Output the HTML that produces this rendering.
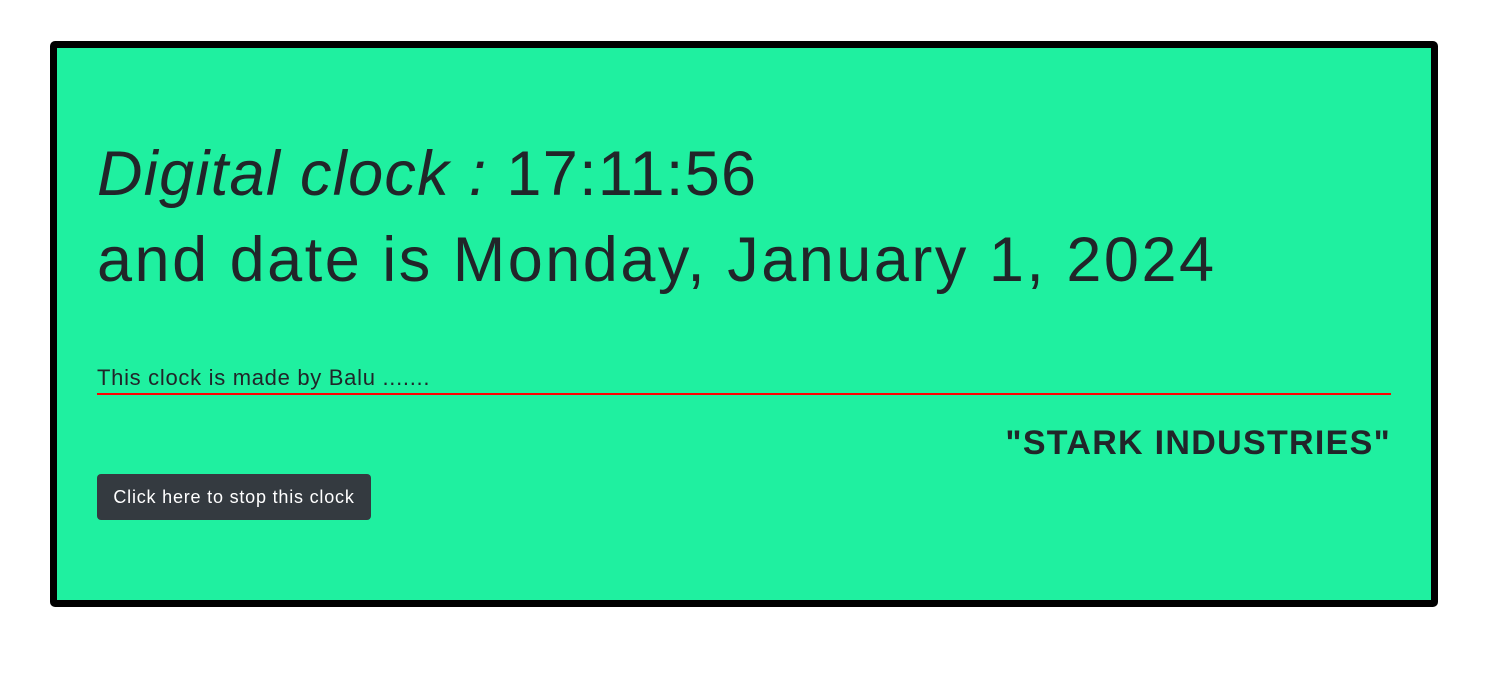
<!DOCTYPE html>
<html><head><meta charset="utf-8"><style>
body{margin:0;width:1491px;height:675px;background:#fff;font-family:"Liberation Sans",sans-serif;color:#212529;position:relative;overflow:hidden}
.box{position:absolute;left:50px;top:41px;width:1374px;height:552px;border:7px solid #000;border-radius:5px;background:#1ff0a0}
.t{position:absolute;white-space:nowrap}
</style></head><body>
<div class="box"></div>
<div class="t" style="left:97px;top:134px;font-size:63px;line-height:80px;letter-spacing:1.3px"><span style="font-style:italic;font-weight:300">Digital clock :</span> 17:11:56</div>
<div class="t" style="left:97px;top:220px;font-size:63px;line-height:80px;letter-spacing:2.5px">and date is Monday, January 1, 2024</div>
<div class="t" style="left:97px;top:363px;font-size:22px;line-height:30px;letter-spacing:0.7px">This clock is made by Balu .......</div>
<div style="position:absolute;left:97px;top:393px;width:1294px;height:2px;background:#f00"></div>
<div class="t" style="right:100px;top:422px;font-size:34px;line-height:42px;font-weight:bold;letter-spacing:1.3px">"STARK INDUSTRIES"</div>
<div style="position:absolute;left:97px;top:474px;width:274px;height:46px;background:#343a40;border-radius:4px;color:#fff;font-size:18px;line-height:46px;text-align:center;letter-spacing:0.8px">Click here to stop this clock</div>
</body></html>
